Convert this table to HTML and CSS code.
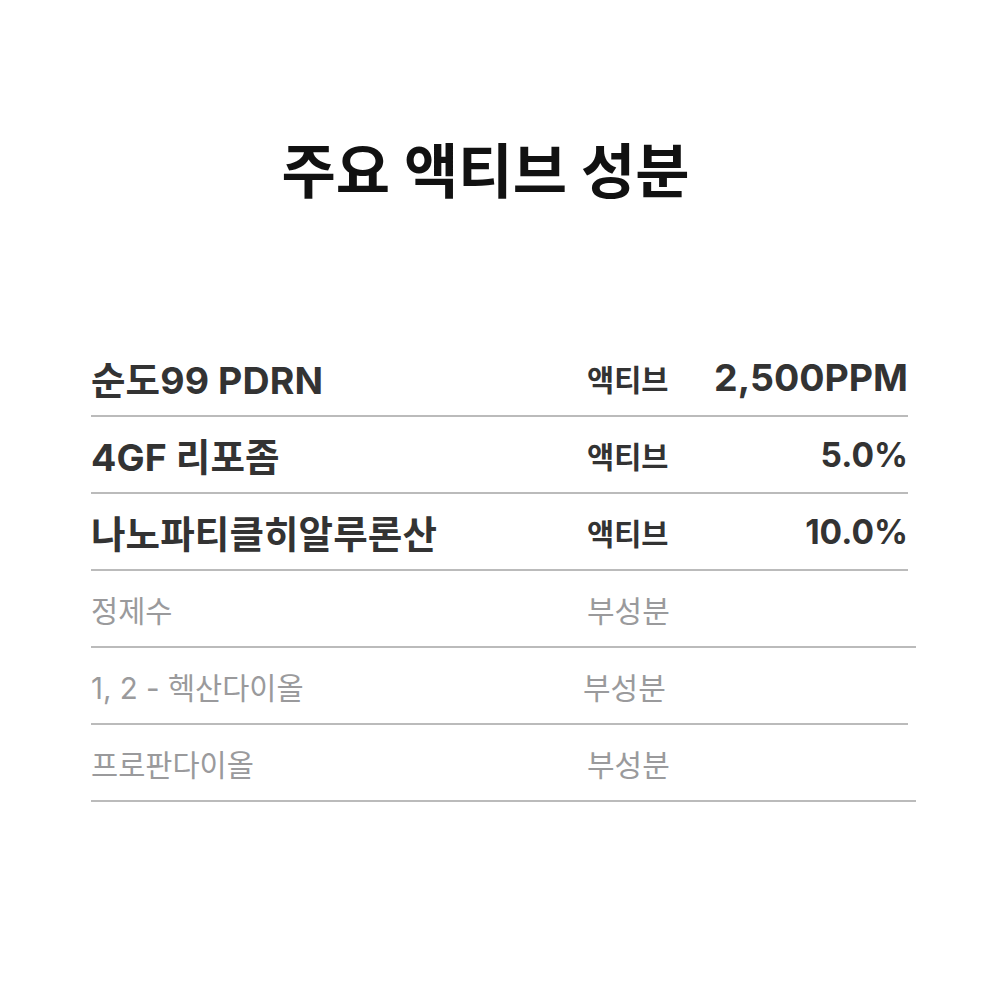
FILE: index.html
```html
<!DOCTYPE html>
<html lang="ko">
<head>
<meta charset="utf-8">
<link rel="stylesheet" href="styles.css">
</head>
<body>
<main class="page">
  <h1 class="title">주요 액티브 성분</h1>
  <div class="table">
    <div class="row active">
      <span class="name">순도99 PDRN</span>
      <span class="type">액티브</span>
      <span class="value">2,500PPM</span>
    </div>
    <div class="row active">
      <span class="name">4GF 리포좀</span>
      <span class="type">액티브</span>
      <span class="value percent">5.0%</span>
    </div>
    <div class="row active">
      <span class="name">나노파티클히알루론산</span>
      <span class="type">액티브</span>
      <span class="value percent">10.0%</span>
    </div>
    <div class="row sub wide">
      <span class="name">정제수</span>
      <span class="type">부성분</span>
      <span class="value"></span>
    </div>
    <div class="row sub shift">
      <span class="name">1, 2 - 헥산다이올</span>
      <span class="type">부성분</span>
      <span class="value"></span>
    </div>
    <div class="row sub wide">
      <span class="name">프로판다이올</span>
      <span class="type">부성분</span>
      <span class="value"></span>
    </div>
  </div>
</main>
</body>
</html>
```

FILE: styles.css
```css
html, body {
  margin: 0;
  padding: 0;
  background: #ffffff;
}
body {
  font-family: "Inter", "Noto Sans CJK KR", sans-serif;
  color: #333333;
}
.page {
  width: 1000px;
  height: 1000px;
  box-sizing: border-box;
  padding: 132px 0 0 91px;
}
.title {
  margin: 0 120px 0 0;
  text-align: center;
  font-size: 59px;
  font-weight: 700;
  color: #111111;
  line-height: 80px;
  letter-spacing: 0;
}
.table {
  margin-top: 128px;
  width: 817px;
  display: flex;
  flex-direction: column;
}
.row {
  display: grid;
  grid-template-columns: 496px 120px 1fr;
  align-items: center;
  height: 75px;
  border-bottom: 2px solid #bbbbbb;
}
.row.wide {
  margin-right: -8px;
}
.name {
  white-space: nowrap;
}
.active .name,
.active .value {
  font-size: 37.5px;
  font-weight: 700;
}
.active .name {
  letter-spacing: 0.1px;
}
.active .value.percent {
  font-size: 33.5px;
}
.active .type {
  font-size: 29.5px;
  font-weight: 700;
}
.value {
  text-align: right;
}
.sub {
  color: #9a9a9c;
}
.sub .name {
  font-size: 29.5px;
  font-weight: 400;
}
.sub .type {
  font-size: 30px;
  font-weight: 400;
  white-space: nowrap;
}
.sub.shift .type {
  margin-left: -4px;
}
```
